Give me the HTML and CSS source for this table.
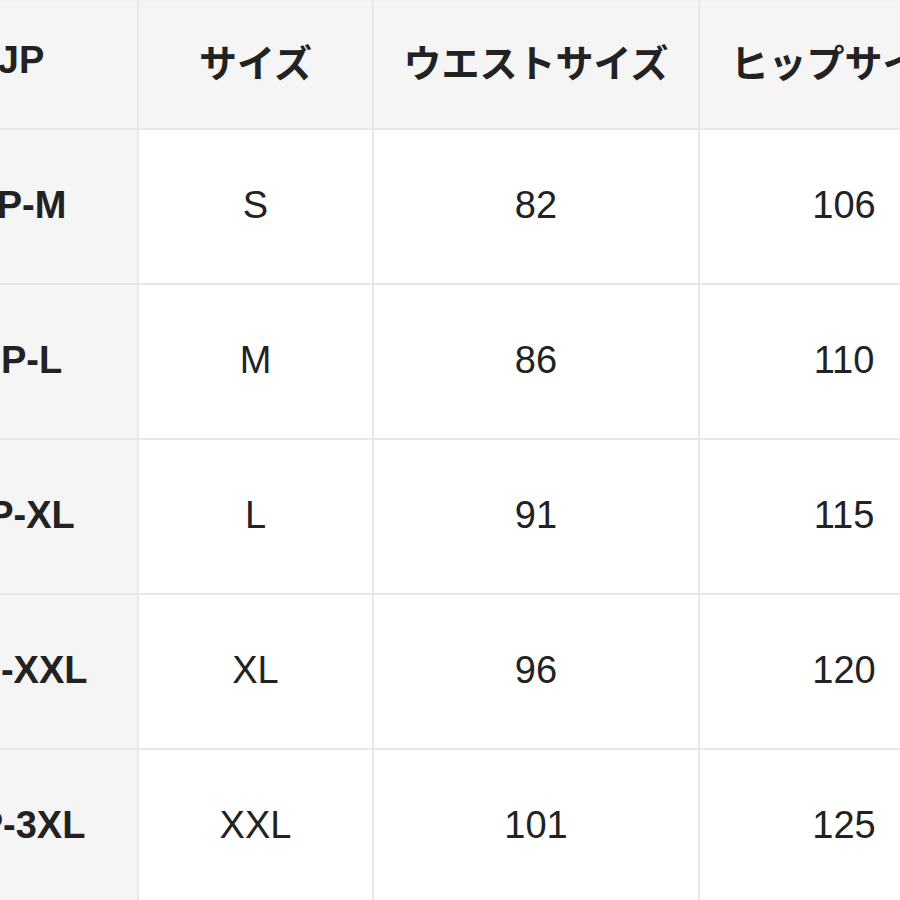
FILE: index.html
```html
<!DOCTYPE html>
<html lang="ja">
<head>
<meta charset="utf-8">
<title>サイズ表</title>
<link rel="stylesheet" href="styles.css">
</head>
<body>
<div class="frame">
<table class="size-table">
  <colgroup>
    <col class="c-jp">
    <col class="c-size">
    <col class="c-waist">
    <col class="c-hip">
  </colgroup>
  <thead>
    <tr class="head-row">
      <th class="stub">JP</th>
      <th>サイズ</th>
      <th>ウエストサイズ</th>
      <th>ヒップサイズ</th>
    </tr>
  </thead>
  <tbody>
    <tr><th class="stub">JP-M</th><td>S</td><td>82</td><td>106</td></tr>
    <tr><th class="stub">JP-L</th><td>M</td><td>86</td><td>110</td></tr>
    <tr><th class="stub">JP-XL</th><td>L</td><td>91</td><td>115</td></tr>
    <tr><th class="stub">JP-XXL</th><td>XL</td><td>96</td><td>120</td></tr>
    <tr><th class="stub">JP-3XL</th><td>XXL</td><td>101</td><td>125</td></tr>
  </tbody>
</table>
</div>
</body>
</html>
```

FILE: styles.css
```css
html, body {
  margin: 0;
  padding: 0;
  background: #ffffff;
}

.frame {
  width: 900px;
  height: 900px;
  overflow: hidden;
}

.size-table {
  margin-left: -97px;
  border-collapse: collapse;
  table-layout: fixed;
  width: 1085px;
  font-family: "Liberation Sans", Arial, "Noto Sans CJK JP", sans-serif;
  font-size: 38px;
  color: #222222;
}

.c-jp { width: 234px; }
.c-size { width: 235px; }
.c-waist { width: 326px; }
.c-hip { width: 290px; }

.size-table th,
.size-table td {
  border: 2px solid #e8e8e8;
  text-align: center;
  vertical-align: middle;
  padding: 0;
  line-height: 1.15;
}

.size-table thead tr:first-child th {
  border-top: 1px solid #efefef;
}

.head-row {
  height: 128px;
}

.head-row th {
  background: #f5f5f5;
  font-family: "Noto Sans CJK JP", "Liberation Sans", sans-serif;
  font-weight: 700;
  padding-bottom: 6px;
}

.head-row th.stub {
  font-family: "Liberation Sans", Arial, sans-serif;
}

tbody tr {
  height: 155px;
}

.stub {
  background: #f5f5f5;
  font-weight: 700;
}

tbody td {
  font-weight: 400;
  background: #ffffff;
}
```
